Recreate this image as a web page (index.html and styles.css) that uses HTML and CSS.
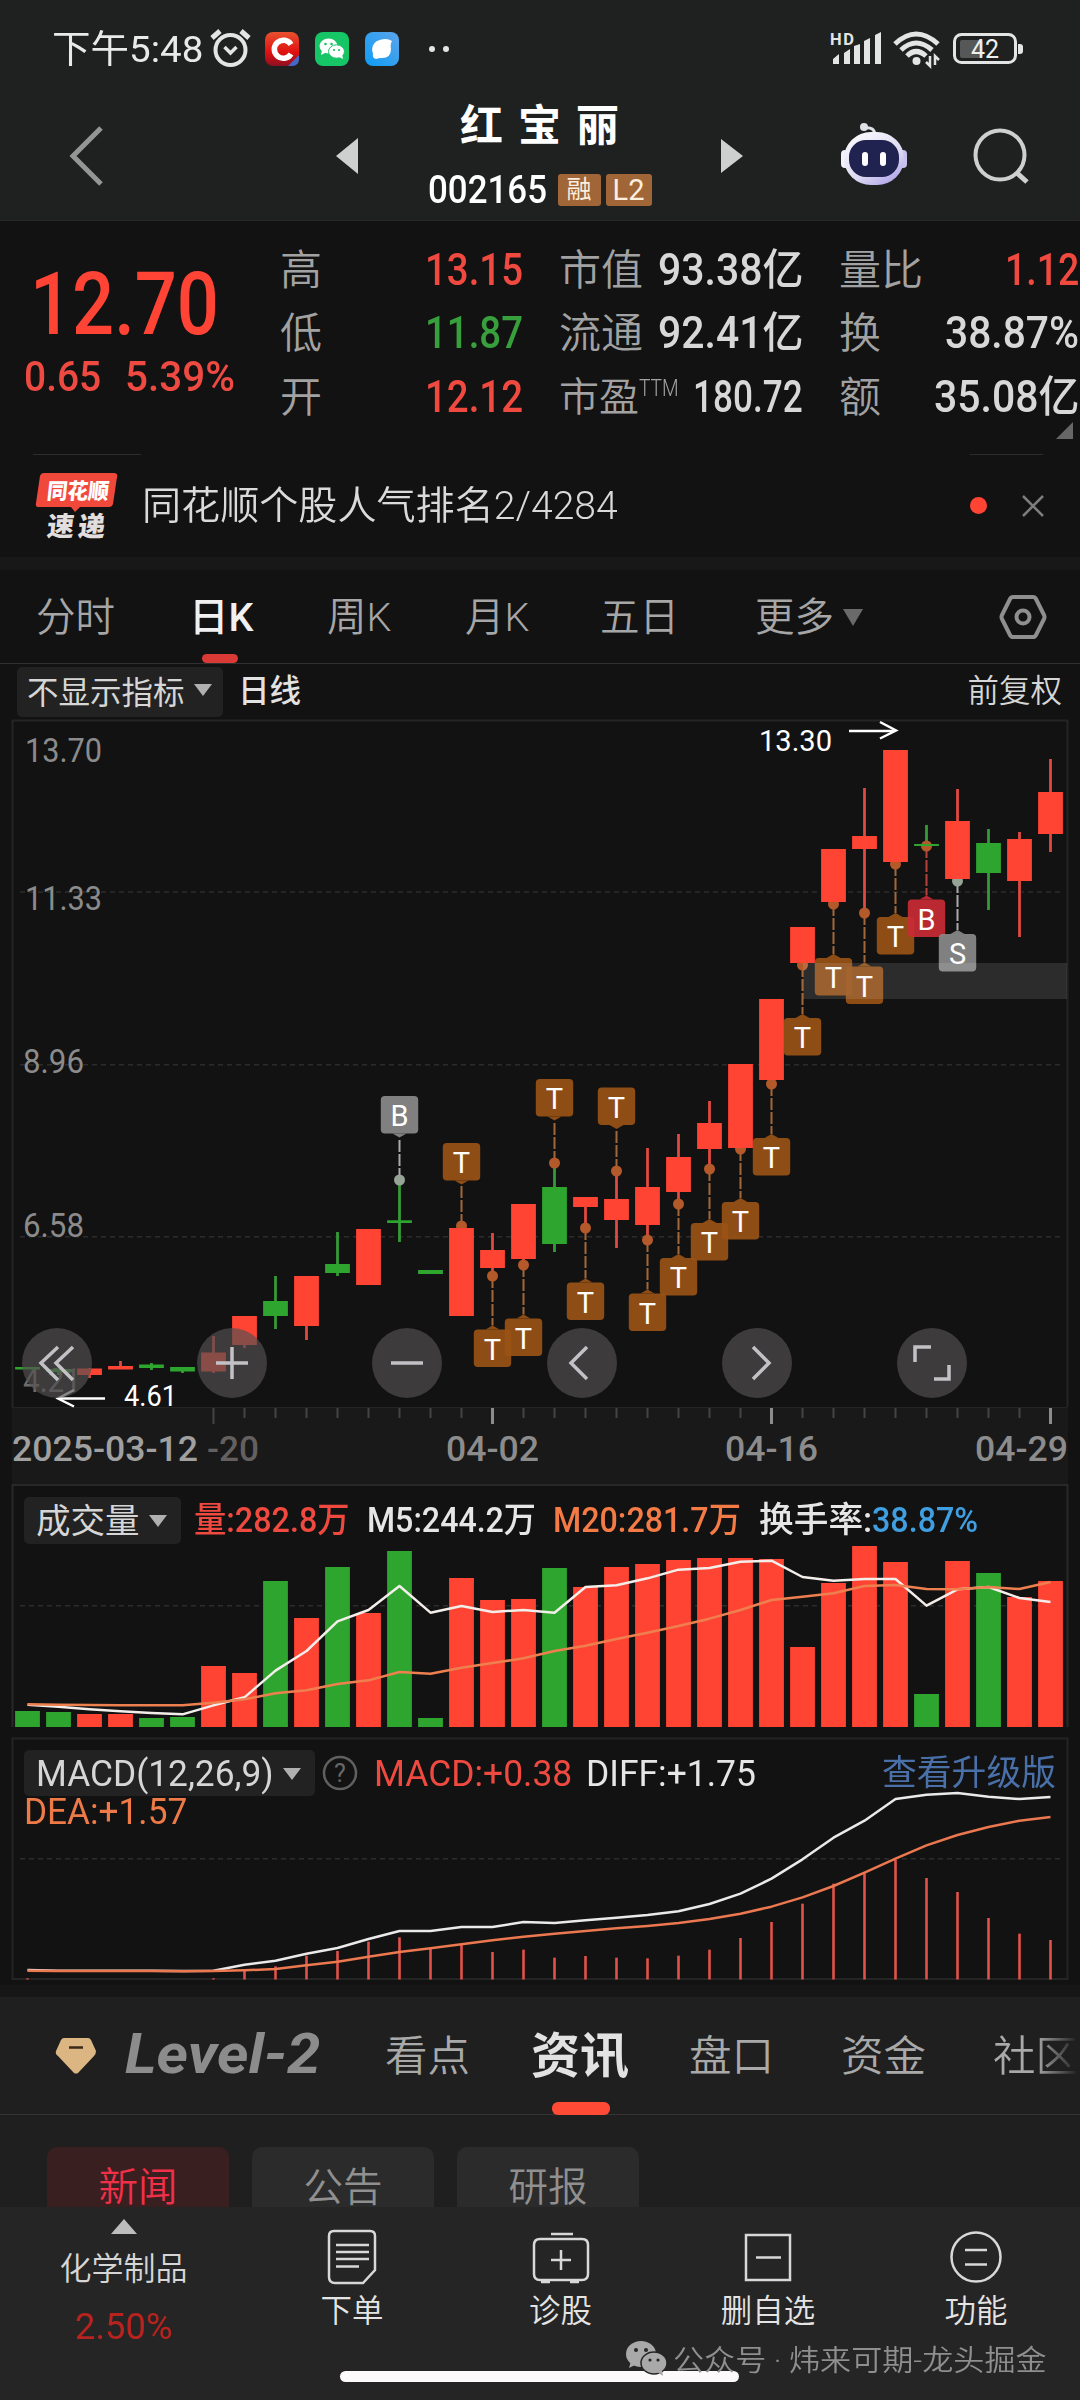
FILE: index.html
```html
<!DOCTYPE html>
<html lang="zh-CN">
<head>
<meta charset="utf-8">
<title>红宝丽 002165</title>
<link rel="stylesheet" href="styles.css">
</head>
<body>
<div class="screen">
  <header class="top">
    <div class="status">
      <span class="clock" data-w="151">下午5:48</span>
      <svg class="alarm" width="42" height="40" viewBox="0 0 42 40" fill="none" stroke="#e2e5e4" stroke-width="4"><circle cx="20.500" cy="21" r="15"/><path d="M14.500 18l6 6 6-6" stroke-width="3.500"/><path d="M2 9l8-7M39 9l-8-7" stroke-width="5"/></svg>
      <svg class="app-c" width="34" height="34" viewBox="0 0 34 34"><defs><linearGradient id="gr" x2="0" y2="1"><stop stop-color="#e8512f"/><stop offset=".6" stop-color="#e01010"/><stop offset="1" stop-color="#8a1022"/></linearGradient></defs><rect width="34" height="34" rx="8" fill="url(#gr)"/><path d="M26 12.500A9 9 0 1 0 26 22" fill="none" stroke="#fff" stroke-width="5.600"/><path d="M23 34L34 23v4q0 7-7 7z" fill="#4668c8"/></svg>
      <svg class="app" width="34" height="34" viewBox="0 0 34 34"><rect width="34" height="34" rx="8" fill="#15c566"/><ellipse cx="13.500" cy="14" rx="9" ry="7.500" fill="#fff"/><path d="M7 18l-1 5 6-3z" fill="#fff"/><ellipse cx="21.500" cy="19.500" rx="8" ry="6.700" fill="#fff" stroke="#15c566"/><path d="M24 25l4 2-1-5z" fill="#fff"/><g fill="#15c566"><circle cx="10.500" cy="12" r="1.300"/><circle cx="16.500" cy="12" r="1.300"/><circle cx="19" cy="18" r="1.100"/><circle cx="24" cy="18" r="1.100"/></g></svg>
      <svg class="app" width="34" height="34" viewBox="0 0 34 34"><defs><linearGradient id="gb" x1="1" x2="0" y2="1"><stop stop-color="#5ea4ea"/><stop offset="1" stop-color="#0c9cf5"/></linearGradient></defs><rect width="34" height="34" rx="8" fill="url(#gb)"/><path d="M12 9q9-4 15 0-2 3-1 8 0 9-9 9-4 0-6 1-4-1-3-5-3-9 4-13z" fill="#fff"/></svg>
      <span class="dots"><i></i><i></i></span>
      <svg class="signal" width="54" height="36" viewBox="0 0 54 36" fill="#e2e5e4"><text x="0" y="14" font-size="16.500" font-weight="700" textLength="24">HD</text><path d="M3 33v-5l6-5v10zM14 33V22l6-4v15zM24 33V15l6-2v20zM34 33V10l6-3v26zM45 33V4l6-3v32z"/></svg>
      <svg class="wifi" width="48" height="36" viewBox="0 0 48 36" fill="none" stroke="#e2e5e4" stroke-width="5"><path d="M2 13Q23-7 45 13"/><path d="M8 19Q23 5 39 19" /><path d="M14 25q9-9 19 0"/><circle cx="23.500" cy="30" r="4" fill="#e2e5e4" stroke="none"/><path d="M37 25v10l-4-4M42 34V25l4 4" stroke-width="2.500"/></svg>
      <svg class="battery" width="72" height="32" viewBox="0 0 72 32"><rect x="1.500" y="1.500" width="61" height="28" rx="7" fill="none" stroke="#e2e5e4" stroke-width="3"/><rect x="7" y="7" width="23" height="18" rx="2" fill="#555857"/><path d="M65 11h2q3 0 3 3v4q0 3-3 3h-2z" fill="#e2e5e4"/><text x="32" y="25" font-size="25" text-anchor="middle" fill="#eef0ef">42</text></svg>
    </div>
    <div class="titlebar">
      <svg class="back" width="36" height="60" viewBox="0 0 36 60" fill="none" stroke="#929695" stroke-width="5"><path d="M32 2L4 30l28 28"/></svg>
      <svg class="prev" width="22" height="36" viewBox="0 0 22 36" fill="#cdd0cf"><path d="M0 18L22 0v36z"/></svg>
      <div class="stock">
        <div class="name">红宝丽</div>
        <div class="code"><span class="digits" data-w="119">002165</span><b class="badge">融</b><b class="badge l2">L2</b></div>
      </div>
      <svg width="22" height="36" viewBox="0 0 22 36" fill="#cdd0cf"><path d="M22 18L0 1v34z"/></svg>
      <svg class="robot" width="68" height="64" viewBox="0 0 68 64"><defs><linearGradient id="rb" x2=".7" y2="1"><stop stop-color="#fff"/><stop offset=".7" stop-color="#dcd8f2"/><stop offset="1" stop-color="#b5a9ea"/></linearGradient></defs><path d="M24 6q11-2 11 8" fill="none" stroke="#dfe1e6" stroke-width="3"/><circle cx="24" cy="5" r="4" fill="#dfe1e6"/><rect x="1" y="28" width="9" height="18" rx="4" fill="#f3f2fa"/><rect x="58" y="28" width="9" height="18" rx="4" fill="#c9c2ee"/><rect x="4" y="10" width="60" height="53" rx="27" fill="url(#rb)"/><rect x="9" y="18" width="50" height="37" rx="17" fill="#20224f"/><rect x="22" y="30" width="6" height="14" rx="3" fill="#fff"/><rect x="40" y="30" width="6" height="14" rx="3" fill="#fff"/></svg>
      <svg class="search" width="60" height="60" viewBox="0 0 60 60" fill="none" stroke="#cdd0cf" stroke-width="4"><circle cx="28" cy="29" r="24.500"/><path d="M44 46l11 10" stroke-width="5"/></svg>
    </div>
  </header>

  <section class="quote">
    <div class="last">
      <div class="price" data-w="189">12.70</div>
      <div class="change"><span data-w="77">0.65</span><span data-w="110">5.39%</span></div>
    </div>
    <dl class="stats">
      <dt>高</dt><dd class="up" data-w="98">13.15</dd>
      <dt>市值</dt><dd class="big" data-w="145">93.38亿</dd>
      <dt>量比</dt><dd class="up big" data-w="74">1.12</dd>
      <dt>低</dt><dd class="down" data-w="98">11.87</dd>
      <dt>流通</dt><dd class="big" data-w="145">92.41亿</dd>
      <dt>换</dt><dd class="big" data-w="134">38.87%</dd>
      <dt>开</dt><dd class="up" data-w="98">12.12</dd>
      <dt class="ttm">市盈<sup data-w="40">TTM</sup></dt><dd class="big" data-w="110">180.72</dd>
      <dt>额</dt><dd class="big" data-w="145">35.08亿</dd>
    </dl>
    <i class="corner"></i>
  </section>

  <section class="notice">
    <svg class="brand" width="82" height="68" viewBox="0 0 82 68"><path d="M8 1h70q4 0 3 4l-4 27q-1 3-4 3H44l-5 5-4-5H3q-4 0-3-4L4 4q1-3 4-3z" fill="#f0493c"/><text x="11" y="27" font-size="22" font-weight="900" fill="#fff" textLength="62" lengthAdjust="spacingAndGlyphs" transform="skewX(-6)" dx="2">同花顺</text><text x="17" y="64" font-size="27" font-weight="900" fill="#e2dede" textLength="58" lengthAdjust="spacing" transform="skewX(-6)">速递</text></svg>
    <span class="msg" data-w="476">同花顺个股人气排名2/4284</span>
    <i class="reddot"></i>
    <svg class="close" width="22" height="22" viewBox="0 0 22 22" stroke="#7d7d7d" stroke-width="2.500"><path d="M1 1l20 20M21 1L1 21"/></svg>
  </section>

  <nav class="periods">
    <span>分时</span><span class="on">日K</span><span>周K</span><span>月K</span><span>五日</span><span class="more">更多<i class="tri"></i></span>
    <svg width="46" height="44" viewBox="0 0 46 44" fill="none" stroke="#8f8f8f" stroke-width="4"><path d="M13 2h20q2 0 3 2l8 16q1 2 0 4l-8 16q-1 2-3 2H13q-2 0-3-2L2 24q-1-2 0-4l8-16q1-2 3-2z"/><circle cx="23" cy="22" r="6.500"/></svg>
  </nav>

  <section class="kline">
    <div class="kbar"><span class="pill">不显示指标<i class="tri"></i></span><b>日线</b><span class="fq">前复权</span></div>
    <div class="stack">
      <svg id="candles" width="1080" height="764" viewBox="0 720 1080 764"></svg>
      <div class="tools">
        <button><svg viewBox="-35 -35 70 70"><path d="M1-16L-16 0 1 17M16-16L-1 0 16 17"/></svg></button>
        <button><svg viewBox="-35 -35 70 70"><path d="M-16 0h32M0-16v32"/></svg></button>
        <button><svg viewBox="-35 -35 70 70"><path d="M-16 0h32"/></svg></button>
        <button><svg viewBox="-35 -35 70 70"><path d="M5-16L-11 0 5 16"/></svg></button>
        <button><svg viewBox="-35 -35 70 70"><path d="M-4-16L12 0-4 16"/></svg></button>
        <button><svg viewBox="-35 -35 70 70"><path d="M-17-1v-15h16M2 16h15V2"/></svg></button>
      </div>
    </div>
  </section>

  <section class="stack vol">
    <svg id="volume" width="1080" height="253" viewBox="0 1484 1080 253"></svg>
    <div class="legend"><span class="pill">成交量<i class="tri"></i></span><span class="up" data-w="156">量:282.8万</span><span class="m5" data-w="169">M5:244.2万</span><span class="m20" data-w="188">M20:281.7万</span><span class="hs" data-w="113">换手率:</span><span class="blue" data-w="106">38.87%</span></div>
  </section>

  <section class="stack macd">
    <svg id="macd" width="1080" height="260" viewBox="0 1737 1080 260"></svg>
    <div class="legend"><span class="pill"><span data-w="238">MACD(12,26,9)</span><i class="tri"></i></span><svg class="help" width="36" height="36" viewBox="0 0 36 36"><circle cx="18" cy="18" r="16" fill="none" stroke="#606060" stroke-width="2.500"/><text x="18" y="27" font-size="25" text-anchor="middle" fill="#686868">?</text></svg><span class="up" data-w="198">MACD:+0.38</span><span class="diff" data-w="170">DIFF:+1.75</span><a data-w="174">查看升级版</a></div>
    <div class="dea" data-w="163">DEA:+1.57</div>
  </section>

  <section class="info">
    <nav class="tabs">
      <svg width="40" height="36" viewBox="0 0 40 36"><path d="M8 0h24q2 0 3 2l5 11q0 3-2 5L22 35q-2 1-4 0L2 18q-3-2-2-5L5 2q1-2 3-2z" fill="#dbb582"/><path d="M13 9.500h14" stroke="#3a2a18" stroke-width="2.500"/></svg>
      <span class="lv" data-w="196">Level-2</span><span>看点</span><span class="on">资讯</span><span>盘口</span><span>资金</span><span class="fade">社区</span>
    </nav>
    <div class="chips"><span class="hot">新闻</span><span>公告</span><span>研报</span></div>
  </section>

  <footer class="dock">
    <div class="sector"><i></i><span>化学制品</span><em data-w="98">2.50%</em></div>
    <div class="act"><svg width="60" height="58" viewBox="0 0 60 58"><path d="M12 3h36q5 0 5 5v34L41 55H13q-6 0-6-6V8q0-5 5-5z"/><path d="M14 17h33M14 24h33M14 31h33M14 38.500h23"/></svg><span>下单</span></div>
    <div class="act"><svg width="60" height="58" viewBox="0 0 60 58"><path d="M20 6h22M9 11h42q6 0 6 6v29q0 6-6 6H9q-6 0-6-6V17q0-6 6-6zM30 22v20M20 32h20"/><path d="M10 54h9M39 54h9" stroke-width="4"/></svg><span>诊股</span></div>
    <div class="act"><svg width="60" height="58" viewBox="0 0 60 58"><path d="M8 7h44v45H8zM18 29.500h25"/></svg><span>删自选</span></div>
    <div class="act"><svg width="60" height="58" viewBox="0 0 60 58"><circle cx="30" cy="29" r="24.500"/><path d="M19 22h22M19 36.500h22"/></svg><span>功能</span></div>
    <div class="home"></div>
    <div class="mark"><svg width="42" height="36" viewBox="0 0 42 36"><ellipse cx="16" cy="13" rx="15" ry="13" fill="#a9a9a9"/><path d="M6 20l-2 7 8-4z" fill="#a9a9a9"/><ellipse cx="29" cy="22" rx="13" ry="11" fill="#a9a9a9" stroke="#252525" stroke-width="1.500"/><path d="M32 31l6 4-1-6z" fill="#a9a9a9"/><g fill="#252525"><circle cx="11" cy="9" r="2"/><circle cx="21" cy="9" r="2"/><circle cx="25" cy="19" r="1.600"/><circle cx="33" cy="19" r="1.600"/></g></svg><span data-w="374">公众号 · 炜来可期-龙头掘金</span></div>
  </footer>
</div>
<script src="chart.js"></script>
</body>
</html>
```
FILE: styles.css
```css
* { box-sizing: border-box; }
body { margin: 0; background: #121212; }
.screen {
  width: 1080px; height: 2400px; overflow: hidden;
  display: flex; flex-direction: column;
  font-family: Roboto, "Noto Sans CJK SC", sans-serif;
  color: #d6d6d6; background: #121212;
}
svg { display: block; flex: none; overflow: visible; }
svg text { font-family: Roboto, "Noto Sans CJK SC", sans-serif; }
[data-w] { display: inline-block; white-space: nowrap; flex: none; }
[data-w] > .fit { display: inline-block; transform-origin: 0 50%; }
.up { color: #f04a40; }
.down { color: #37a03c; }

/* header */
.top { height: 221px; background: #1e2120; border-bottom: 1px solid #252827; }
.status { height: 98px; display: flex; align-items: center; padding-left: 52px; }
.clock { font-size: 37.500px; line-height: 40px; color: #e8eaea; }
.alarm { margin: 0 13px 0 7px; }
.app { margin-left: 16px; }
.dots { display: flex; gap: 8px; margin-left: 30px; }
.dots i { width: 6px; height: 6px; border-radius: 50%; background: #e2e5e4; }
.signal { margin-left: 381px; fill: #e2e5e4; }
.wifi { margin-left: 9px; }
.battery { margin-left: 12px; }
.titlebar { height: 116px; display: flex; align-items: center; padding-left: 69px; }
.prev { margin-left: 231px; }
.stock { width: 363px; height: 116px; display: flex; flex-direction: column; align-items: center; }
.name { font-size: 43px; font-weight: 700; line-height: 48px; letter-spacing: 15px; margin-right: -15px; margin-top: 4px; color: #fff; }
.code { display: flex; align-items: center; gap: 5px; height: 38px; margin-top: 21px; }
.code .digits { font-size: 39px; font-weight: 500; line-height: 38px; color: #fff; margin-right: 6px; }
.badge { width: 43px; height: 32px; border-radius: 3px; background: #a06638; color: #fdeedd; font-weight: 400; font-size: 25px; line-height: 31px; text-align: center; }
.badge.l2 { width: 46px; font-size: 29px; line-height: 33px; }
.robot { margin-left: 97px; margin-top: -5px; }
.search { margin-left: 64px; }

/* quote */
.quote { height: 233px; display: flex; position: relative; }
.last { width: 280px; padding: 37px 0 0 24px; }
.price { font-size: 87px; font-weight: 500; line-height: 92px; margin-left: 6px; color: #ff4436; }
.change { display: flex; gap: 24px; font-size: 43px; font-weight: 500; line-height: 48px; color: #ee4a42; margin-top: 2px; }
.stats {
  margin: 18px 0 0; display: grid;
  grid-template-columns: 120px 123px 121px 159px 121px 155px;
  grid-auto-rows: 63.500px; align-items: center;
}
.stats dt { font-size: 42px; font-weight: 350; color: #a2a2a2; white-space: nowrap; line-height: 60px; margin-left: 36px; }
.stats dt:nth-of-type(3n+1) { margin-left: 0; }
.stats dd { margin: 0; font-size: 43.500px; font-weight: 500; line-height: 60px; justify-self: end; }
.stats .big { color: #d8d8d8; }
.stats .up.big { color: #f04a40; }
.stats .ttm { font-size: 40px; }
.ttm sup { font-size: 23px; line-height: 20px; font-weight: 350; vertical-align: 15px; }
.corner { position: absolute; right: 7px; top: 201px; border-left: 17px solid transparent; border-bottom: 17px solid #666; }

/* notice */
.notice {
  height: 103px; display: flex; align-items: center; padding-left: 36px;
  background:
    linear-gradient(#2c2c2c, #2c2c2c) 33px 0 / 108px 1px no-repeat,
    linear-gradient(#2c2c2c, #2c2c2c) 970px 0 / 73px 1px no-repeat;
}
.msg { font-size: 39px; font-weight: 350; line-height: 50px; margin: 0 0 0 24px; color: #dadada; }
.reddot { width: 17px; height: 17px; border-radius: 50%; background: #ff4433; margin-left: 352px; }
.close { margin-left: 35px; }

/* period tabs */
.periods { height: 107px; border-top: 13px solid #181818; border-bottom: 1px solid #303030; display: flex; align-items: center; padding-left: 36px; font-size: 39.500px; font-weight: 350; color: #a6a6a6; }
.periods span { width: 135px; flex: none; height: 93px; line-height: 96px; position: relative; white-space: nowrap; }
.periods span:nth-child(2) { margin-left: 18px; width: 138px; }
.periods span:nth-child(3) { width: 138px; }
.periods span:nth-child(5) { width: 155px; }
.periods span.on { color: #f0f0f0; font-weight: 500; }
.periods span.on::after { content: ""; position: absolute; left: 13px; bottom: 0; width: 36px; height: 9px; border-radius: 5px; background: #d93a36; }
.periods .more { width: 245px; }
.periods svg { margin-top: 1px; }
.tri { display: inline-block; border: solid transparent; border-width: 12px 9px 0; border-top-color: #b0b0b0; }
.periods .tri { border-width: 17px 10px 0; border-top-color: #6a6a6a; margin-left: 9px; vertical-align: 5px; }

/* candlestick panel */
.kbar { height: 56px; display: flex; align-items: center; padding: 0 18px 0 17px; font-size: 31.500px; }
.pill { display: inline-flex; align-items: center; justify-content: space-between; background: #222; border-radius: 5px; color: #d6d6d6; font-weight: 400; flex: none; }
.kbar .pill { width: 206px; height: 50px; padding: 0 11px 5px 10px; }
.kbar b { font-weight: 500; margin-left: 15px; color: #e2e2e2; line-height: 50px; margin-top: -1px; }
.fq { margin-left: auto; line-height: 50px; margin-top: 0; font-weight: 350; }
.stack { display: grid; flex: none; }
.stack > * { grid-area: 1 / 1; }
.tools { align-self: start; display: flex; gap: 105px; padding: 608px 0 0 22px; }
.tools button { width: 70px; height: 70px; padding: 0; border: 0; border-radius: 50%; background: rgba(82, 80, 80, .68); }
.tools path { fill: none; stroke: #c2c2c6; stroke-width: 3.500; }

/* volume and MACD panels */
.legend { align-self: start; display: flex; align-items: center; padding-left: 24px; font-size: 35px; line-height: 46px; }
.vol .legend { margin-top: 12px; font-weight: 500; }
.legend > span[data-w] { padding-top: 2px; }
.vol .pill { width: 157px; height: 47px; padding: 1px 14px 0 12px; margin-right: 13px; font-size: 34.500px; }
.vol .m5 { margin-left: 17px; color: #e6e6e6; }
.vol .m20 { margin-left: 17px; color: #f47b45; }
.vol .hs { margin-left: 18px; color: #e6e6e6; }
.vol .blue { margin-left: 0; color: #3f9fe0; }
.macd .legend { margin-top: 12px; font-size: 36.500px; }
.macd .pill { width: 291px; height: 46px; padding: 2px 14px 0 12px; margin-right: 7px; }
.help { margin-right: 16px; }
.macd .diff { margin-left: 14px; color: #e6e6e6; }
.macd a { margin-left: auto; margin-right: 24px; margin-top: 2px; color: #4a70aa; font-size: 35px; }
.dea { align-self: start; margin: 54px 0 0 24px; font-size: 36.500px; line-height: 42px; color: #ee7a48; }

/* information tabs */
.info { height: 210px; background: #1f1f1f; flex: none; overflow: hidden; }
.tabs { height: 118px; display: flex; align-items: center; padding-left: 56px; border-bottom: 1px solid #353333; font-size: 42.500px; font-weight: 350; color: #a9a9a9; }
.tabs > span { line-height: 120px; height: 117px; white-space: nowrap; position: relative; flex: none; }
.tabs .lv { font-style: italic; font-weight: 700; font-size: 55px; color: #8c8c8c; margin: 0 64px 0 29px; line-height: 115px; }
.tabs .on { font-size: 49px; font-weight: 700; color: #e2e2e2; margin: 0 60px 0 61px; }
.tabs .on::after { content: ""; position: absolute; left: 21px; bottom: -1px; width: 58px; height: 13px; border-radius: 6px; background: #ff4a35; }
.tabs span:nth-child(5) { margin-right: 67px; }
.tabs .fade { margin-left: 67px; background: linear-gradient(90deg, #a9a9a9 50%, #1f1f1f 100%); -webkit-background-clip: text; background-clip: text; color: transparent; }
.chips { display: flex; gap: 23px; padding: 32px 0 0 47px; }
.chips span { width: 182px; height: 78px; border-radius: 10px; background: #2b2b2b; text-align: center; font-size: 39.500px; font-weight: 350; line-height: 81px; color: #909090; flex: none; }
.chips .hot { background: #3a1f20; color: #f03048; }

/* bottom dock */
.dock { height: 193px; background: #252525; flex: none; position: relative; display: grid; grid-template-columns: 247px 210px 207px 208px 208px; }
.sector { display: flex; flex-direction: column; align-items: center; padding-top: 12px; }
.sector i { border: solid transparent; border-width: 0 13px 15px; border-bottom-color: #bdbdbd; }
.sector > span { font-size: 32px; line-height: 40px; margin-top: 15px; font-weight: 350; }
.sector em { font-style: normal; font-size: 36px; line-height: 40px; margin-top: 18px; color: #b8231f; font-weight: 400; }
.act { display: flex; flex-direction: column; align-items: center; padding-top: 21px; }
.act path, .act circle { fill: none; stroke: #d8d8d8; stroke-width: 2.500; }
.act span { font-size: 31.500px; line-height: 40px; margin-top: 6px; font-weight: 350; color: #e4e4e4; }
.home { position: absolute; left: 340px; top: 164px; width: 399px; height: 11px; border-radius: 6px; background: #fcfafa; }
.mark { position: absolute; left: 625px; top: 132px; display: flex; align-items: center; gap: 6px; font-size: 29px; line-height: 36px; font-weight: 350; color: #8f8f8f; }
.mark span { margin-top: 2px; }
```
FILE: chart.js
```javascript
// squeeze or stretch a label to its column width
function fitLabels() {
  document.querySelectorAll('[data-w]').forEach(function (el) {
    var inner = document.createElement('span');
    inner.className = 'fit';
    inner.textContent = el.textContent;
    el.textContent = '';
    el.appendChild(inner);
    var w = +el.dataset.w;
    var natural = inner.offsetWidth;
    el.style.width = w + 'px';
    inner.style.transform = 'scaleX(' + w / natural + ')';
  });
}

var RED = '#ff4433', GREEN = '#2ea52f';
function X(i) { return 27.5 + 31 * i; }
function rect(x, y, w, h, fill, extra) { return '<rect x="' + x + '" y="' + y + '" width="' + w + '" height="' + h + '" fill="' + fill + '" ' + (extra || '') + '/>'; }
function line(x1, y1, x2, y2, c, w, extra) { return '<path d="M' + x1 + ' ' + y1 + 'L' + x2 + ' ' + y2 + '" stroke="' + c + '" stroke-width="' + w + '" fill="none" ' + (extra || '') + '/>'; }
function grid(y) { return line(20, y, 1064, y, '#2c2c2c', 1.5, 'stroke-dasharray="5 4"'); }
function label(x, y, s, size, w, c, weight) { return '<text x="' + x + '" y="' + y + '" font-size="' + size + '" fill="' + c + '" font-weight="' + (weight || 400) + '" textLength="' + w + '" lengthAdjust="spacingAndGlyphs">' + s + '</text>'; }
function poly(ys, c) {
  return '<polyline fill="none" stroke="' + c + '" stroke-width="2.5" stroke-linejoin="round" points="' + ys.map(function (y, i) { return X(i) + ',' + (1480 + y / 3); }).join(' ') + '"/>';
}

// colour, body top, body bottom, high, low, volume top
var days = [
  ['g',1367,1369.5,1367,1369,1711],['g',1369,1372,1369,1375,1712],['r',1368.5,1375,1368,1378,1714],['r',1366,1369.5,1361,1369,1714],
  ['g',1364.5,1368,1363,1370,1718],['g',1367,1371.5,1367,1373,1717],['r',1352.5,1371.5,1336,1373,1666],['r',1316,1345,1316,1348,1673],
  ['g',1301,1316,1276,1329,1581],['r',1276,1326,1276,1340,1618],['g',1264,1273,1232,1276,1567],['r',1229,1285,1229,1285,1613],
  ['g',1220.3,1223,1183,1242,1551],['g',1270,1274,1270,1274,1718],['r',1228,1316,1228,1316,1578],['r',1250,1268,1233,1272,1600],
  ['r',1204,1259,1204,1263,1599],['g',1187,1244,1163,1252,1568],['r',1197,1207,1197,1228,1587],['r',1199,1220,1171,1248,1567],
  ['r',1187,1225,1148,1240,1564],['r',1157,1192,1134,1204,1560],['r',1123,1149,1101,1169,1558],['r',1064,1148,1064,1148,1558],
  ['r',999,1080,999,1082,1559],['r',927,963,927,963,1647],['r',849,902,849,902,1583],['r',836,849,788,913,1546],
  ['r',750,862,750,862,1562],['g',844,846,825,846,1694],['r',821,879,789,879,1561],['g',843,873,829,910,1573],
  ['r',839,881,832,937,1597],['r',792,834,759,852,1581]
];
// day index, letter, dot y, tag top, colour
var tags = [
  [12,'B',1180,1096,'gray'],[14,'T',1226,1143],[15,'T',1276,1329.5],[16,'T',1265,1318.5],[17,'T',1163,1079],[18,'T',1228,1282.5],
  [19,'T',1171,1087.5],[20,'T',1240,1293.5],[21,'T',1204,1258],[22,'T',1169,1223],[23,'T',1149,1202],[24,'T',1084,1138],
  [25,'T',965,1018],[26,'T',904,958],[27,'T',913,966.5],[28,'T',864,917],[29,'B',846,899.5,'red'],[30,'S',881,934,'gray']
];

function drawCandles() {
  var s = rect(12, 1407, 1056, 77, '#1a1919');
  s += '<path d="M12.5 1407V720.500H1067.500V1407" fill="none" stroke="#242424" stroke-width="2"/>' + line(12, 1407.5, 1067, 1407.5, '#242424', 1);
  s += grid(892) + grid(1064.7) + grid(1236.7);
  s += label(25, 762, '13.70', 34, 77, '#8b8b8b') + label(25, 910, '11.33', 34, 77, '#8b8b8b') + label(23, 1073, '8.96', 34, 61, '#8b8b8b') + label(23, 1237, '6.58', 34, 61, '#8b8b8b') + label(23, 1392, '4.21', 34, 58, '#6c6c6c');
  days.forEach(function (d, i) { s += line(X(i), d[3], X(i), d[4], d[0] === 'r' ? '#e04a40' : '#359a38', 2.8); });
  tags.forEach(function (t) {
    var x = X(t[0]), above = t[3] < t[2], c = t[4] === 'gray' ? '#8a8a8a' : t[4] === 'red' ? '#c92c35' : '#9a5217';
    var lc = t[4] === 'gray' ? '#aaa' : t[4] === 'red' ? '#b8403c' : '#a3683a';
    s += line(x, t[2], x, above ? t[3] + 42 : t[3] - 4, lc, 2, 'stroke-dasharray="12 2"');
    s += '<circle cx="' + x + '" cy="' + t[2] + '" r="5.500" fill="' + (t[4] === 'gray' ? '#96a397' : '#b4592a') + '"/>';
    s += '<g fill="' + c + '" opacity=".92">' + rect(x - 18.7, t[3], 37.4, 37.5, c, 'rx="4"');
    s += above ? '<path d="M' + (x - 7) + ' ' + (t[3] + 37.5) + 'l7 4 7-4z"/></g>' : '<path d="M' + (x - 7) + ' ' + t[3] + 'l7-4 7 4z"/></g>';
    s += '<text x="' + x + '" y="' + (t[3] + 30) + '" font-size="29" fill="#fff" text-anchor="middle">' + t[1] + '</text>';
  });
  days.forEach(function (d, i) { s += rect(X(i) - 12.4, d[1], 24.8, d[2] - d[1], d[0] === 'r' ? RED : GREEN); });
  s += rect(803, 963, 264, 36, '#fff', 'fill-opacity=".11"');
  s += label(759, 750.5, '13.30', 30, 73, '#fff') + line(849, 731, 894, 731, '#fff', 2.5) + '<path d="M880 722l16 8.500-16 8" fill="none" stroke="#fff" stroke-width="2.500"/>';
  s += label(124, 1406, '4.61', 30, 53, '#fff') + line(60, 1398.5, 105, 1398.5, '#fff', 2.5) + '<path d="M74 1390l-16 8.500 16 8" fill="none" stroke="#fff" stroke-width="2.500"/>';
  for (var i = 6; i < 34; i++) {
    var major = i === 15 || i === 24 || i === 33;
    s += line(X(i), 1408, X(i), major || i === 6 ? 1424 : 1418, major ? '#8c8c8c' : '#444', major ? 3 : 2);
  }
  s += label(12, 1461, '2025-03-12', 35, 186, '#a0a0a0', 500) + label(207, 1461, '-20', 35, 52, '#646060', 500);
  s += label(446, 1461, '04-02', 35, 93, '#8c8c8c', 500) + label(725, 1461, '04-16', 35, 93, '#8c8c8c', 500) + label(975, 1461, '04-29', 35, 93, '#8c8c8c', 500);
  document.getElementById('candles').innerHTML = s;
}

function drawVolume() {
  var s = '<path d="M12.500 1727V1485H1067.500V1727" fill="none" stroke="#282828" stroke-width="2"/>' + grid(1605.7);
  days.forEach(function (d, i) { s += rect(X(i) - 12.4, d[5], 24.8, 1727 - d[5], d[0] === 'r' ? RED : GREEN); });
  s += poly([674,680,688,694,699,703,676,652,572,513,424,390,318,398,378,396,390,398,321,316,295,269,264,245,242,291,302,297,297,377,328,321,354,366], '#f3eeea');
  s += poly([673,674,675,676,676,676,668,658,640,631,612,601,576,581,563,549,535,513,497,477,458,438,416,390,360,350,340,318,315,327,328,321,327,306], '#ee8050');
  document.getElementById('volume').innerHTML = s;
}

function drawMacd() {
  var s = '<path d="M12.500 1738.500H1067.500V1979H12.500z" fill="none" stroke="#242424" stroke-width="2"/>' + rect(0, 1985, 1080, 12, '#161616') + grid(1858.7);
  var bars = [1495,0,0,0,0,0,1495,1469,1459,1427,1413,1385,1372,1404,1394,1416,1409,1433,1428,1433,1435,1427,1409,1374,1326,1271,1211,1180,1140,1194,1236,1314,1361,1380];
  bars.forEach(function (y, i) { if (y) s += line(X(i), 1480 + y / 3, X(i), 1979.5, '#e2524a', 2.6); });
  s += poly([1470,1472,1472,1472,1472,1473,1472,1454,1442,1421,1404,1377,1353,1353,1341,1341,1326,1329,1321,1313,1305,1294,1272,1241,1196,1138,1073,1022,957,944,939,950,957,951], '#eaeaea');
  s += poly([1472,1473,1473,1473,1473,1474,1473,1471,1467,1456,1445,1430,1416,1405,1393,1381,1370,1361,1353,1345,1338,1329,1317,1301,1280,1252,1218,1178,1136,1096,1065,1041,1022,1011], '#ec7850');
  document.getElementById('macd').innerHTML = s;
}

fitLabels();
drawCandles();
drawVolume();
drawMacd();
```
